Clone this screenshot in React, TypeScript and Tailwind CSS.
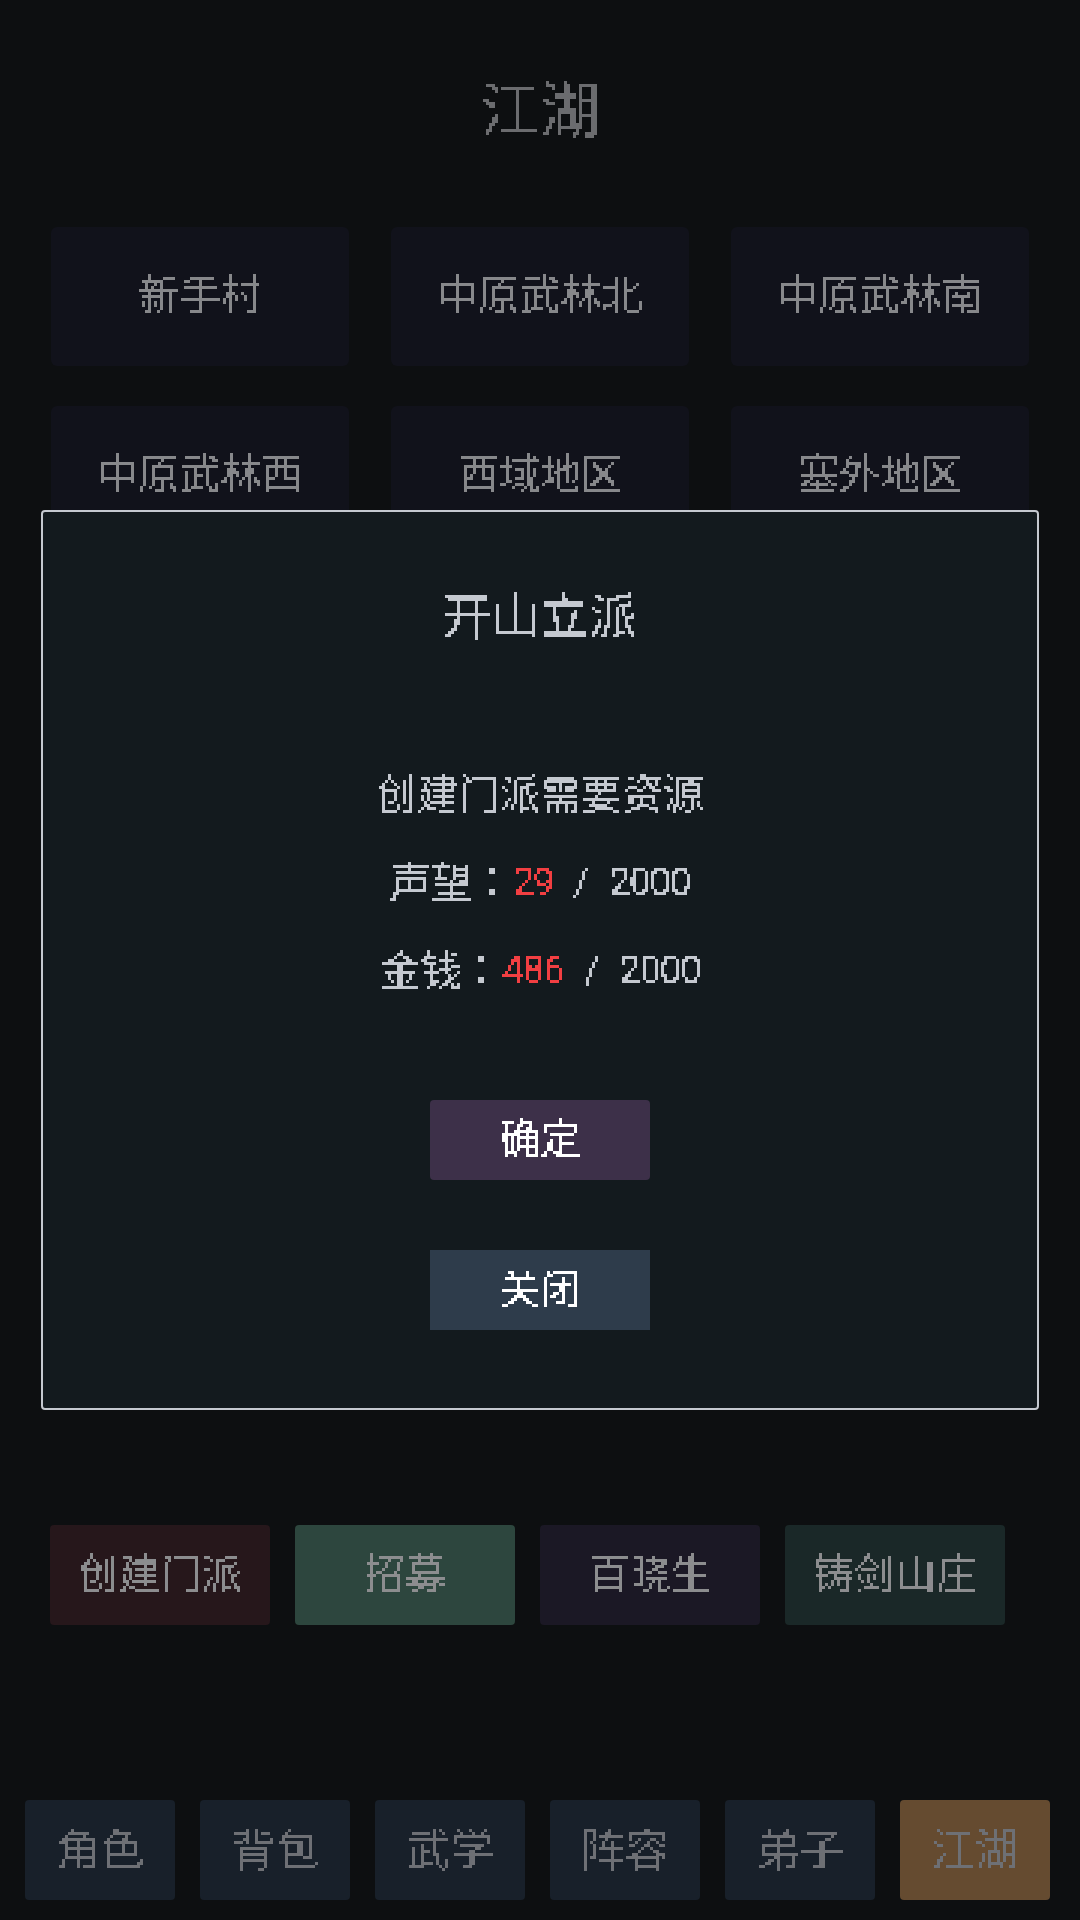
const CJK = "font-['Noto_Sans_CJK_SC','Noto_Sans',sans-serif]";
const PX = "[filter:url(#px)]";
const NUM = "font-['Roboto',sans-serif] text-[38px] tracking-[-1px] [vertical-align:2px]";

const regions = ["新手村", "中原武林北", "中原武林南", "中原武林西", "西域地区", "塞外地区"];
const actions = [
  { label: "创建门派", cls: "bg-[#26171b]" },
  { label: "招募", cls: "bg-[#2d463e]" },
  { label: "百晓生", cls: "bg-[#1b1825]" },
  { label: "铸剑山庄", cls: "bg-[#1a2828]" },
];
const nav = [
  { label: "角色", cls: "bg-[#18202a]" },
  { label: "背包", cls: "bg-[#18202a]" },
  { label: "武学", cls: "bg-[#18202a]" },
  { label: "阵容", cls: "bg-[#18202a]" },
  { label: "弟子", cls: "bg-[#18202a]" },
  { label: "江湖", cls: "bg-[#654b30]" },
];

function Stat({ name, value, total }: { name: string; value: string; total: string }) {
  return (
    <p className={`h-[88px] leading-[88px] text-[41px] text-[#c5c9d0] whitespace-nowrap ${PX}`}>
      {name}
      <span className="font-['Noto_Sans_CJK_TC',sans-serif]">：</span>
      <span className={`${NUM} text-[#f23f42]`}>{value}</span>
      <span className={`${NUM} [word-spacing:12px]`}> / {total}</span>
    </p>
  );
}

export default function App() {
  return (
    <div className={`relative w-[1080px] h-[1920px] overflow-hidden bg-[#0d0f11] flex flex-col ${CJK}`}>
      <svg className="absolute w-0 h-0" aria-hidden="true">
        <filter id="px" x="0" y="0" width="100%" height="100%" colorInterpolationFilters="sRGB">
          <feFlood x="1" y="1" width="1" height="1" floodColor="#000" />
          <feComposite width="3" height="3" />
          <feTile result="grid" />
          <feComposite in="SourceGraphic" in2="grid" operator="in" />
          <feMorphology operator="dilate" radius="1" />
          <feComponentTransfer>
            <feFuncA type="discrete" tableValues="0 1" />
          </feComponentTransfer>
        </filter>
      </svg>

      <h1 className={`h-[223px] pt-[72px] mb-[4px] text-center text-[60px] leading-[68px] font-normal text-[#6b6c6f] ${PX}`}>江湖</h1>

      <div className="grid grid-cols-3 gap-x-[42px] gap-y-[40px] px-[51px]">
        {regions.map((r) => (
          <div key={r} className="h-[139px] pb-[8px] rounded-[6px] bg-[#11121b] flex items-center justify-center text-[41px] text-[#87888b]">
            <span className={PX}>{r}</span>
          </div>
        ))}
      </div>

      <div className="mt-auto flex gap-[25px] pl-[50px]">
        {actions.map((a) => (
          <div key={a.label} className={`w-[220px] h-[100px] pb-[6px] rounded-[4px] flex items-center justify-center text-[41px] text-[#8c8d8f] ${a.cls}`}>
            <span className={PX}>{a.label}</span>
          </div>
        ))}
      </div>

      <div className="mt-[175px] mb-[20px] flex gap-[25px] pl-[25px]">
        {nav.map((n) => (
          <div key={n.label} className={`w-[150px] h-[100px] pb-[6px] rounded-[4px] flex items-center justify-center text-[44px] text-[#6e7075] ${n.cls}`}>
            <span className={PX}>{n.label}</span>
          </div>
        ))}
      </div>

      <div className="absolute left-[41px] top-[510px] w-[998px] h-[900px] rounded-[4px] border-2 border-[#c5c9d0] bg-[#131a1e] flex flex-col items-center">
        <h2 className={`mt-[71px] h-[60px] text-[49px] leading-[60px] font-normal text-[#c5c9d0] ${PX}`}>开山立派</h2>
        <div className="mt-[104px] flex flex-col items-center">
          <p className={`h-[88px] leading-[88px] text-[41px] text-[#c5c9d0] ${PX}`}>创建门派需要资源</p>
          <Stat name="声望" value="29" total="2000" />
          <Stat name="金钱" value="486" total="2000" />
        </div>
        <button className="mt-[89px] w-[220px] h-[80px] pb-[6px] rounded-[4px] bg-[#3d3049] text-[41px] text-white">
          <span className={`inline-block ${PX}`}>确定</span>
        </button>
        <button className="mt-[70px] w-[220px] h-[80px] pb-[6px] bg-[#2e3c4b] text-[41px] text-white">
          <span className={`inline-block ${PX}`}>关闭</span>
        </button>
      </div>
    </div>
  );
}
